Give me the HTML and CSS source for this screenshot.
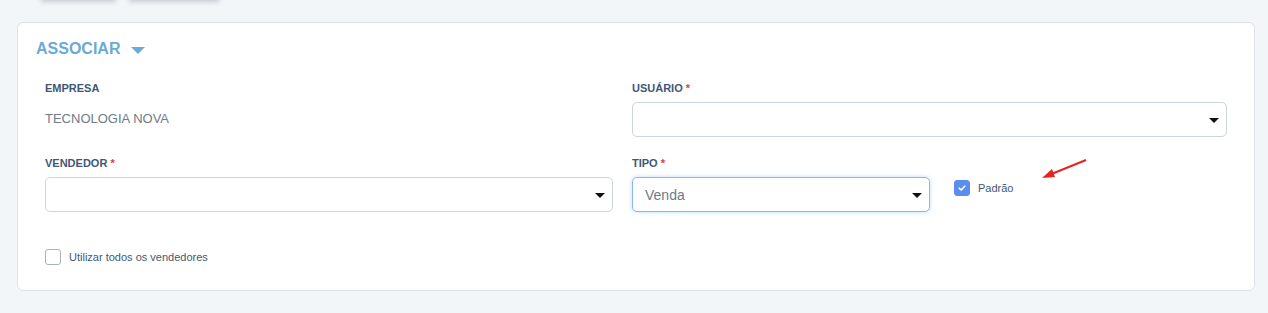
FILE: index.html
```html
<!DOCTYPE html>
<html lang="pt">
<head>
<meta charset="utf-8">
<link rel="stylesheet" href="styles.css">
</head>
<body>
<div class="toolbar">
  <div class="tbtn tbtn-a"></div>
  <div class="tbtn tbtn-b"></div>
</div>
<section class="card">
  <h2 class="card-title">ASSOCIAR <span class="caret-up"></span></h2>
  <div class="grid">
    <div class="field">
      <div class="label">EMPRESA</div>
      <div class="static">TECNOLOGIA NOVA</div>
    </div>
    <div class="field">
      <div class="label">USUÁRIO <span class="req">*</span></div>
      <div class="select"><span class="value"></span><span class="tri"></span></div>
    </div>
    <div class="field">
      <div class="label">VENDEDOR <span class="req">*</span></div>
      <div class="select"><span class="value"></span><span class="tri"></span></div>
    </div>
    <div class="field field-row">
      <div class="field tipo">
        <div class="label">TIPO <span class="req">*</span></div>
        <div class="select focused"><span class="value">Venda</span><span class="tri"></span></div>
      </div>
      <label class="check padrao">
        <span class="box checked"><svg width="10" height="10" viewBox="0 0 10 10"><path d="M2.2 5.2 L4.2 7 L7.8 3.2" fill="none" stroke="#fff" stroke-width="1.6" stroke-linecap="round" stroke-linejoin="round"/></svg></span>
        <span class="check-text">Padrão</span>
      </label>
      <svg class="annot" width="50" height="24" viewBox="0 0 50 24"><line x1="47" y1="2" x2="10" y2="17" stroke="#e8231d" stroke-width="2"/><polygon points="3,20 13,11 16,19" fill="#e8231d"/></svg>
    </div>
  </div>
  <label class="check all">
    <span class="box"></span>
    <span class="check-text">Utilizar todos os vendedores</span>
  </label>
</section>
</body>
</html>
```
FILE: styles.css
```css
html, body {
  margin: 0;
  padding: 0;
  background: #f3f6f9;
  font-family: "Liberation Sans", Arial, sans-serif;
}
.toolbar {
  display: flex;
  gap: 11px;
  padding-left: 40px;
  height: 0;
}
.tbtn {
  height: 30px;
  margin-top: -30px;
  background: #eef1f5;
  border-radius: 4px;
  box-shadow: 0 2px 5px rgba(40, 50, 70, 0.22);
}
.tbtn-a { width: 77px; }
.tbtn-b { width: 92px; }
.card {
  margin: 22px 13px 0 17px;
  background: #fff;
  border: 1px solid #dde2e8;
  border-radius: 6px;
  padding: 0 27px 25px 27px;
  position: relative;
}
.card-title {
  margin: 0 0 0 -9px;
  padding-top: 16px;
  font-size: 16px;
  line-height: 20px;
  font-weight: bold;
  color: #6aaad6;
  display: flex;
  align-items: center;
  gap: 11px;
}
.caret-up {
  width: 0;
  height: 0;
  border-left: 7px solid transparent;
  border-right: 7px solid transparent;
  border-top: 7px solid #6aaad6;
  margin-top: 2px;
}
.grid {
  display: grid;
  grid-template-columns: 568px 1fr;
  column-gap: 19px;
  row-gap: 19px;
  margin-top: 22px;
}
.label {
  font-size: 11px;
  line-height: 14px;
  font-weight: bold;
  color: #3f5775;
  margin-bottom: 7px;
}
.req { color: #e53a3a; }
.static {
  font-size: 13px;
  line-height: 18px;
  color: #6e7b89;
  margin-top: 15px;
}
.select {
  height: 35px;
  box-sizing: border-box;
  border: 1px solid #cfd5dc;
  border-radius: 5px;
  display: flex;
  align-items: center;
  justify-content: space-between;
  padding: 0 7px 0 12px;
  background: #fff;
}
.select.focused {
  border-color: #8cb7ee;
  box-shadow: 0 0 4px rgba(120, 170, 240, 0.45);
}
.value {
  font-size: 14px;
  color: #6e7b89;
}
.tri {
  width: 0;
  height: 0;
  border-left: 5px solid transparent;
  border-right: 5px solid transparent;
  border-top: 5px solid #111;
  margin-top: 1px;
}
.field-row {
  display: flex;
  align-items: flex-start;
  position: relative;
}
.tipo { width: 298px; }
.check {
  display: flex;
  align-items: center;
  gap: 8px;
}
.box {
  width: 16px;
  height: 16px;
  box-sizing: border-box;
  border: 1px solid #a9b3bf;
  border-radius: 3px;
  background: #fff;
  display: flex;
  align-items: center;
  justify-content: center;
}
.box.checked {
  background: #5b8def;
  border-color: #5b8def;
}
.check-text {
  font-size: 11px;
  color: #3f5775;
}
.padrao {
  margin-left: 24px;
  margin-top: 24px;
}
.annot {
  position: absolute;
  left: 407px;
  top: 2px;
}
.all {
  margin-top: 37px;
}
```
